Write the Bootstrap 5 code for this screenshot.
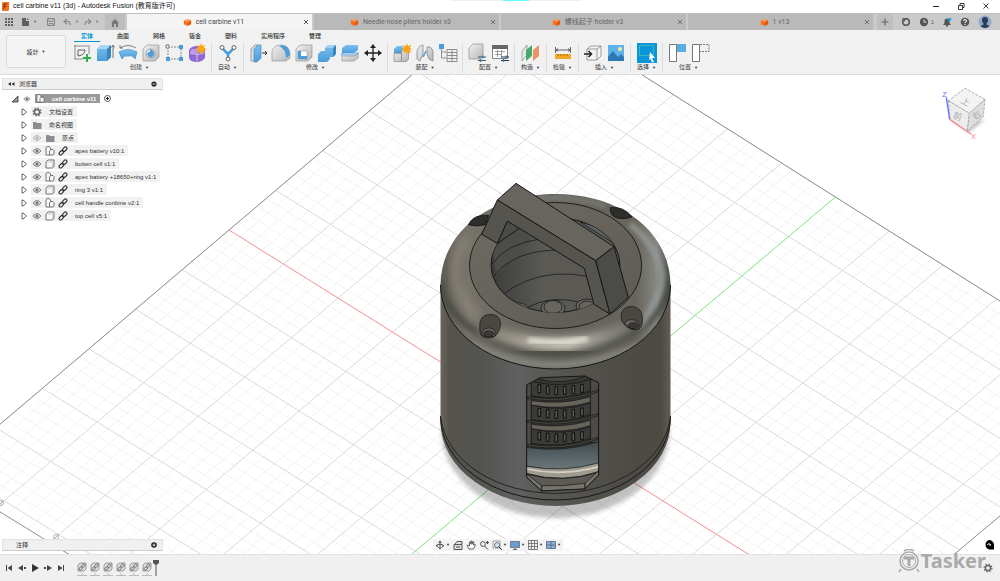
<!DOCTYPE html>
<html lang="zh-CN">
<head>
<meta charset="utf-8">
<meta name="viewport" content="width=device-width, initial-scale=1">
<title>cell carbine v11 (3d) - Autodesk Fusion</title>
<link rel="stylesheet" href="https://cdn.jsdelivr.net/npm/bootstrap@5.3.0/dist/css/bootstrap.min.css">
<style>
  body { font: 6px/8px "Liberation Sans", "Noto Sans CJK SC", sans-serif; color: #333; background: #fff; }
  button { font: inherit; color: inherit; background: none; border: 0; padding: 0; display: inline-flex; align-items: center; justify-content: center; }
  svg { display: block; flex: none; }
  .titlebar { height: 13px; font: 7px/10px "Liberation Sans", "Noto Sans CJK SC", sans-serif; color: #111; padding: 0 2px 1px 0; }
  .notch { top: 0; left: 50%; width: 130px; height: 1px; margin-left: -49px; background: linear-gradient(90deg, #f0f0f0 40%, #6ff 40% 60%, #f0f0f0 60%); }
  .win button { width: 25px; height: 12px; }
  .tabbar { height: 17px; background: #cacaca; color: #666; border-top: 1px solid #c0c0c0; }
  .quick, .account { width: 127px; flex: none; }
  .slim-btn { width: 18px; }
  .wide-btn { width: 22px; }
  .home-btn { width: 20px; margin-left: auto; margin-right: 2px; background: #bdbdbd; }
  .tab-strip { gap: 2px; }
  .doc-tab { background: #b9b9b9; font: 7px/10px Roboto, "Noto Sans CJK SC", sans-serif; min-width: 0; }
  .doc-tab.active { background: #f4f4f4; color: #444; }
  .doc-tab .close-btn { width: 12px; }
  .plus-btn { width: 16px; background: #bfbfbf; }
  .ribbon { background: #f1f1f1; border-bottom: 1px solid #dcdcdc; height: 45px; }
  .space-btn { width: 60px; height: 33px; border: 1px solid #d9d9d9; border-radius: 2px; background: #f4f4f4; margin: 5px 2px 0 6px; flex: none; }
  .ribbon-tabs { padding-left: 1px; height: 12px; }
  .ribbon-tabs button { padding: 0 12px; position: relative; font-weight: 500; }
  .ribbon-tabs .active { color: #0696d7; font-weight: 700; }
  .ribbon-tabs .active::after { content: ""; position: absolute; left: 5px; right: 5px; bottom: 0; height: 1px; background: #0696d7; }
  .tool-group { padding: 0 4px; border-right: 1px solid #ddd; min-width: 32px; height: 29px; margin-top: 1px; }
  .tool-group:last-child { border: 0; }
  .tools { gap: 3px; height: 21px; }
  .chosen { background: #0a96d8; }
  .caret { font-size: 4px; margin-left: 3px; }
  .viewport { overflow: hidden; min-height: 0; background: #fff; }
  .overlay-row { padding: 3px 0 0 2px; }
  .panel-head { width: 161px; height: 12px; background: #f0f0f0; border: 1px solid #e2e2e2; border-bottom-color: #ccc; padding: 0 5px; }
  .tree { padding: 2px 0 0 9px; }
  .tree li { height: 13px; }
  .kids-list { padding: 0 0 0 18px; }
  .twist { margin-right: 3px; }
  .entry { height: 11px; background: #f1f1f1; padding: 0 4px 0 1px; gap: 3px; }
  .entry span { padding-left: 4px; }
  .root-name { background: #999; color: #fff; height: 9px; padding: 0 4px 0 1px; gap: 7px; font-weight: 700; }
  .root-radio { appearance: none; width: 7px; height: 7px; margin: 0 0 0 4px; border: 1px solid #555; border-radius: 50%; background: radial-gradient(#222 35%, #fff 40%); }
  .dock { display: grid; grid-template-columns: 1fr auto 1fr; padding: 0 6px 3px 2px; }
  .navbar-3d { background: #f3f3f3; height: 12px; padding: 0 2px; gap: 3px; }
  .navbar-3d .caret { margin-left: 1px; }
  .timeline { height: 27px; background: #f0f0f0; border-top: 1px solid #e2e2e2; padding: 0 7px 0 5px; }
  .play { gap: 5px; }
  .play button { width: 8px; height: 10px; }
  .features { gap: 3px; margin-left: 12px; }
  .brand-mark { right: 14px; bottom: 8px; color: #aaa; font: 700 20px/24px "Noto Sans", sans-serif; z-index: 2; gap: 1px; }
</style>
</head>
<body class="vh-100 d-flex flex-column overflow-hidden position-relative">

<svg width="0" height="0" class="position-absolute">
  <defs>
    <linearGradient id="gb" x2="0" y2="1"><stop stop-color="#7cc0ee"/><stop offset="1" stop-color="#4a9ddb"/></linearGradient>
    <linearGradient id="gg" x2="1" y2="1"><stop stop-color="#f2f2f2"/><stop offset="1" stop-color="#b5b5b5"/></linearGradient>
    <symbol id="cube-o" viewBox="0 0 10 10"><path fill="#ff9a4d" d="M1 2.500 6 1l3 1.500-4 2z"/><path fill="#ff6a13" d="M1 2.500 5 4.500V9L1 7z"/><path fill="#e2550a" d="M9 2.500 5 4.500V9l4-2z"/></symbol>
    <symbol id="x" viewBox="0 0 8 8"><path stroke="currentColor" stroke-width=".9" d="M2 2l4 4M6 2 2 6"/></symbol>
    <symbol id="eye" viewBox="0 0 10 10"><path fill="#ddd" stroke="#888" d="M1 5q4-5 8 0-4 5-8 0z"/><circle cx="5" cy="5" r="1.600" fill="#777"/></symbol>
    <symbol id="comp" viewBox="0 0 10 10"><path fill="#f8f8f8" stroke="#555" stroke-width=".8" d="M1 8.500v-7l1-.8h2.500l1 1.300v1.500h2.500l1 1V8L8 9H1zM4.500 9V5l1.500-1.500"/></symbol>
    <symbol id="body" viewBox="0 0 10 10"><path fill="#f6f7fa" stroke="#555" stroke-width=".8" d="M1 9V3l2-2h6v6L7.500 9z"/><path fill="none" stroke="#bbb" stroke-width=".6" d="M1 3h6.500V9M7.500 3 9 1.500"/></symbol>
    <symbol id="lnk" viewBox="0 0 10 10"><g fill="none" stroke="#333" stroke-width="1.200"><rect x="4.200" y="1.700" width="5" height="3" rx="1.500" transform="rotate(-45 6.700 3.200)"/><rect x=".8" y="5.300" width="5" height="3" rx="1.500" transform="rotate(-45 3.300 6.800)"/></g></symbol>
    <symbol id="tri" viewBox="0 0 8 8"><path fill="#fff" stroke="#555" stroke-width=".9" d="M2 1h1l3.500 3L3 7H2z"/></symbol>
    <symbol id="fold" viewBox="0 0 10 10"><path fill="#8d8d8d" d="M1 2h3l1 1h4.500v6H1z"/></symbol>
    <symbol id="feat" viewBox="0 0 10 10"><path fill="#ddd" stroke="#888" stroke-width=".8" d="M1 9V3l2-2h6v6L7 9z"/><g fill="none" stroke="#666" stroke-width=".9"><rect x="4.300" y="2.500" width="4" height="2.400" rx="1.200" transform="rotate(-45 6.300 3.700)"/><rect x="1.700" y="5.300" width="4" height="2.400" rx="1.200" transform="rotate(-45 3.700 6.500)"/></g></symbol>
    <symbol id="gear" viewBox="0 0 10 10"><circle cx="5" cy="5" r="2.600" fill="none" stroke="#666" stroke-width="1.500"/><circle cx="5" cy="5" r="3.900" fill="none" stroke="#666" stroke-width="1.200" stroke-dasharray="1.500 1.560"/></symbol>
  </defs>
</svg>

<header class="titlebar d-flex align-items-center justify-content-between position-relative">
  <div class="notch position-absolute"></div>
  <div class="d-flex align-items-center">
    <svg class="me-1" width="9" height="11" viewBox="0 0 9 11"><path fill="#f37021" d="M2 2l1-1h6v8l-1 1H2z"/><path fill="none" stroke="#7a2b00" d="M4 8V3h3M4 5.500h2.500"/></svg>
    cell carbine v11 (3d) - Autodesk Fusion (教育版许可)
  </div>
  <div class="win d-flex">
    <button aria-label="最小化"><svg width="8" height="8"><path stroke="#222" d="M1 4.500h6"/></svg></button>
    <button aria-label="还原"><svg width="8" height="8"><path fill="none" stroke="#222" stroke-width=".9" d="M1.500 3.500h4v4h-4zM3 3V1.500h4v4H6"/></svg></button>
    <button aria-label="关闭"><svg width="8" height="8"><path stroke="#222" stroke-width=".9" d="M1.500 1.500l5 5M6.500 1.500l-5 5"/></svg></button>
  </div>
</header>

<nav class="tabbar d-flex">
  <div class="quick d-flex align-items-stretch">
    <button aria-label="数据面板" class="slim-btn"><svg width="8" height="8" fill="#5f5f5f"><path d="M0 0h2v2H0zM3 0h2v2H3zM6 0h2v2H6zM0 3h2v2H0zM3 3h2v2H3zM6 3h2v2H6zM0 6h2v2H0zM3 6h2v2H3zM6 6h2v2H6z"/></svg></button>
    <button aria-label="文件" class="wide-btn"><svg width="9" height="10"><path fill="#5f5f5f" d="M1 1h4v3h3v5H1zM6 1l2 2H6z"/></svg><span class="caret">▼</span></button>
    <button aria-label="保存" class="wide-btn"><svg width="8" height="8" viewBox="0 0 8 8"><path fill="none" stroke="#888" d="M.5.5h7v7h-7zM2 .5v3h4v-3M2 7.500v-2h4v2"/></svg></button>
    <button aria-label="撤消" class="slim-btn"><svg width="9" height="8"><path fill="none" stroke="#8a8a8a" stroke-width="1.200" d="M4 1 1 3.500 4 6M1.500 3.500H6l1.500 3.500"/></svg><span class="caret text-secondary">▼</span></button>
    <button aria-label="重做" class="wide-btn"><svg width="9" height="8"><path fill="none" stroke="#8a8a8a" stroke-width="1.200" d="M5 1l3 2.500L5 6M7.500 3.500H3L1.500 7"/></svg><span class="caret text-secondary">▼</span></button>
    <button aria-label="主页" class="home-btn"><svg width="8" height="9"><path fill="#777" d="M4 1l4 4H7v4H5V6H3v3H1V5H0z"/></svg></button>
  </div>
  <div class="tab-strip d-flex flex-fill">
    <div class="doc-tab active d-flex align-items-center flex-fill w-25"><button class="flex-fill"><svg class="me-1" width="9" height="9"><use href="#cube-o"/></svg>cell carbine v11</button><button class="close-btn" aria-label="关闭"><svg width="8" height="8"><use href="#x"/></svg></button></div>
    <div class="doc-tab d-flex align-items-center flex-fill w-25"><button class="flex-fill"><svg class="me-1" width="9" height="9"><use href="#cube-o"/></svg>Needle-nose pliers holder v3</button><button class="close-btn" aria-label="关闭"><svg width="8" height="8"><use href="#x"/></svg></button></div>
    <div class="doc-tab d-flex align-items-center flex-fill w-25"><button class="flex-fill"><svg class="me-1" width="9" height="9"><use href="#cube-o"/></svg>螺线起子 holder v3</button><button class="close-btn" aria-label="关闭"><svg width="8" height="8"><use href="#x"/></svg></button></div>
    <div class="doc-tab d-flex align-items-center flex-fill w-25"><button class="flex-fill"><svg class="me-1" width="9" height="9"><use href="#cube-o"/></svg>1 v13</button><button class="close-btn" aria-label="关闭"><svg width="8" height="8"><use href="#x"/></svg></button></div>
  </div>
  <div class="account d-flex align-items-stretch justify-content-between ps-1 pe-2">
    <button class="plus-btn" aria-label="新建"><svg width="8" height="8"><path stroke="#666" stroke-width="1.200" d="M4 .5v7M.5 4h7"/></svg></button>
    <button aria-label="扩展"><svg width="10" height="10"><circle cx="5" cy="5" r="3.300" fill="none" stroke="#555" stroke-width="1.600"/><path fill="#555" d="M1 1l4 1-2 3z"/></svg></button>
    <button aria-label="作业状态"><svg width="10" height="10"><circle cx="5" cy="5" r="4.200" fill="#555"/><path fill="none" stroke="#ddd" d="M5 2.500V5h2.500"/></svg>&nbsp;1</button>
    <button aria-label="通知"><svg width="10" height="10"><path fill="#555" d="M1 8l1.500-2V4a2.500 2.500 0 0 1 5 0v2L9 8H6v1.500H4V8z"/><circle cx="7.500" cy="2.500" r="1.800" fill="#18a0e0"/></svg></button>
    <button aria-label="帮助"><svg width="10" height="10"><circle cx="5" cy="5" r="4.300" fill="#555"/><path fill="none" stroke="#fff" d="M3.500 4q0-1.500 1.500-1.500T6.500 4Q6.500 5 5 5.300v.8M5 7v1"/></svg></button>
    <button aria-label="用户"><svg width="14" height="14"><circle cx="7" cy="7" r="6.500" fill="#8faccb"/><path fill="#2c3e55" d="M7 2c4 0 3.500 5 1.500 6.500v1l3 1.500q-4.500 4-9 0l3-1.500v-1C3.500 7 3 2 7 2z"/></svg></button>
  </div>
</nav>

<section class="ribbon d-flex">
  <button class="space-btn">設計<span class="caret">▼</span></button>
  <div>
    <div class="ribbon-tabs d-flex">
      <button class="active">实体</button><button>曲面</button><button>网格</button><button>钣金</button><button>塑料</button><button>实用程序</button><button>管理</button>
    </div>
    <div class="d-flex">
      <div class="tool-group d-flex flex-column align-items-center">
        <div class="tools d-flex">
          <button aria-label="草图"><svg width="20" height="20"><path fill="none" stroke="#777" stroke-width=".8" d="M2 3h14M3 2v14M17 2v9M2 16h9"/><path fill="none" stroke="#444" stroke-width=".8" d="M6 13V7h7q0 5-7 6z"/><path fill="none" stroke="#2eae4e" stroke-width="2" d="M15 11v8M11 15h8"/></svg></button>
          <button aria-label="拉伸"><svg width="20" height="20"><path fill="url(#gb)" d="M2 6l4-4h10v12l-4 4H2z"/><path fill="#a8d6f5" d="M2 6l4-4h10l-4 4z"/><path fill="#3b84bf" d="M12 6l4-4v12l-4 4z"/><path fill="none" stroke="#555" stroke-width=".8" d="M18 3v12M16.500 4.500 18 2l1.500 2.500"/></svg></button>
          <button aria-label="旋转"><svg width="20" height="20"><path fill="url(#gb)" stroke="#3b84bf" stroke-width=".6" d="M1 9q9-5 18 0l-2 7q-2-4-7-3-4-1-6 3z"/><path fill="none" stroke="#666" stroke-width=".8" d="M2 5q8-5 16 0M2 2v3h3"/></svg></button>
          <button aria-label="孔"><svg width="20" height="20"><path fill="url(#gg)" stroke="#999" stroke-width=".7" d="M2 6l4-4h12v12l-4 4H2z"/><circle cx="9.500" cy="10.500" r="4.500" fill="#eee" stroke="#888" stroke-width=".8"/><path fill="#4a9ddb" d="M6 10q4-1 3-4 5 2 4 6-3 4-6 1z"/></svg></button>
          <button aria-label="阵列"><svg width="20" height="20"><path fill="none" stroke="#888" stroke-dasharray="2 1" d="M4 4h13v12H4z"/><path fill="#fff" stroke="#777" d="M2 2h3v3H2z"/><path fill="#4a9ddb" d="M15 2h4v4h-4zM2 14h4v4H2zM15 14h4v4h-4z"/></svg></button>
          <button aria-label="创建形状"><svg width="20" height="20"><path fill="#9169d2" d="M2 7q2-4 8-4 7 0 8 4v8q-3 4-8 4-7 0-8-4z"/><path fill="#b998ea" d="M4 6h5v4H3z"/><path fill="none" stroke="#d7c4f4" d="M3 10q7 3 14 0M10 5v13"/><path fill="#f9a51a" d="M14 0l1.300 3L18 2l-1 3 3 1-3 1 1 3-2.700-1L14 12l-1-3-3 1 1-3-3-1 3-1-1-3 3 1z"/></svg></button>
        </div>
        <span>创建<span class="caret">▼</span></span>
      </div>
      <div class="tool-group d-flex flex-column align-items-center">
        <div class="tools d-flex"><button aria-label="自动建模"><svg width="20" height="20"><path fill="none" stroke="#4a9ddb" stroke-width="2.500" d="M4 5l6 6v6M16 5l-6 6"/><g fill="#fff" stroke="#666"><circle cx="4" cy="4.500" r="2"/><circle cx="16" cy="4.500" r="2"/><circle cx="10" cy="16" r="2"/></g></svg></button></div>
        <span>自动<span class="caret">▼</span></span>
      </div>
      <div class="tool-group d-flex flex-column align-items-center">
        <div class="tools d-flex">
          <button aria-label="按拉"><svg width="20" height="20"><path fill="#ddd" stroke="#888" stroke-width=".8" d="M3 6l4-4h3v12l-4 4H3z"/><path fill="url(#gb)" stroke="#3b84bf" stroke-width=".6" d="M6 6l4-4h3v13l-4 4H6z"/><path fill="none" stroke="#333" d="M14 10h5M17 8l2 2-2 2"/></svg></button>
          <button aria-label="圆角"><svg width="20" height="20"><path fill="url(#gg)" stroke="#999" stroke-width=".7" d="M1 18V8q2-6 9-6 8 0 9 9v4l-4 3z"/><path fill="#4a9ddb" d="M8 3q4-2 8 1 3 3 3 8l-4 3q0-9-7-12z"/></svg></button>
          <button aria-label="抽壳"><svg width="20" height="20"><path fill="url(#gg)" stroke="#999" stroke-width=".7" d="M2 6l4-4h12v12l-4 4H2z"/><path fill="#fff" stroke="#999" stroke-width=".6" d="M4 8h9v8H4z"/><path fill="#4a9ddb" d="M4 16V8h3v5h6v3z"/></svg></button>
          <button aria-label="合并"><svg width="20" height="20"><path fill="url(#gb)" d="M8 5l3-3h8v9l-3 3h-3v2l-3 3H1v-8l3-3h4z"/><path fill="#9dd0f3" d="M8 5l3-3h8l-3 3z"/><path fill="#3b84bf" d="M16 5l3-3v9l-3 3z"/></svg></button>
          <button aria-label="分割"><svg width="20" height="20"><path fill="url(#gb)" d="M2 5l4-3h12v5l-4 3H2z"/><path fill="#cfe8f8" stroke="#4a9ddb" stroke-width=".7" d="M1 11l4-1h14l-4 2H1z"/><path fill="url(#gg)" stroke="#888" stroke-width=".6" d="M2 13h12l4-2v4l-4 3H2z"/></svg></button>
          <button aria-label="移动"><svg width="20" height="20"><path stroke="#222" stroke-width="1.300" d="M10 3v14M3 10h14"/><path fill="#222" d="M10 1l3 4H7zM10 19l3-4H7zM1 10l4-3v6zM19 10l-4-3v6z"/></svg></button>
        </div>
        <span>修改<span class="caret">▼</span></span>
      </div>
      <div class="tool-group d-flex flex-column align-items-center">
        <div class="tools d-flex">
          <button aria-label="新建零部件"><svg width="20" height="20"><path fill="url(#gb)" d="M2 6l3-3h6v7H2z"/><path fill="url(#gg)" stroke="#888" stroke-width=".7" d="M2 10.500h7.500v8H2zM9.500 7h7v9l-2 2.500H9.500z"/><path fill="#f9a51a" d="M15 0l1 3 3-1-1 3 2 1-2 1 1 3-3-1-1 3-1-3-3 1 1-3-3-1 3-1-1-3 3 1z"/></svg></button>
          <button aria-label="联接"><svg width="20" height="20"><path fill="url(#gg)" stroke="#888" stroke-width=".8" d="M2 9q1-6 6-7v9l-3 7-3-2zM18 9q-1-6-6-5v7l2 5 4 2z"/><path fill="none" stroke="#4a9ddb" stroke-width="1.500" d="M8 14l3-6"/></svg></button>
          <button aria-label="零部件表"><svg width="20" height="20"><path fill="#4a9ddb" d="M1 1h5v5H1z"/><path fill="none" stroke="#777" stroke-width=".8" d="M3.500 6v9H8M4 9h4M9 6.500h10v12H9zM9 9.500h10M9 12.500h10M9 15.500h10M14 7v11"/></svg></button>
        </div>
        <span>装配<span class="caret">▼</span></span>
      </div>
      <div class="tool-group d-flex flex-column align-items-center">
        <div class="tools d-flex">
          <button aria-label="配置零件"><svg width="20" height="20"><path fill="url(#gg)" stroke="#999" stroke-width=".8" d="M2 5l4-4h10v11l-3 4H2z"/><path stroke="#333" stroke-width=".8" d="M11 14h8M11 17.500h8"/><path stroke="#2a7fc0" stroke-width="1.500" d="M16 12.500v3M13.500 16v3"/></svg></button>
          <button aria-label="配置表"><svg width="20" height="20"><path fill="#fff" stroke="#666" stroke-width=".8" d="M2.500 2.500h15v13h-15z"/><path fill="#666" d="M2 2h16v4H2z"/><path fill="none" stroke="#888" stroke-width=".8" d="M5 8.500h10M5 11.500h7M7.500 7v7M11.500 7v7"/><path stroke="#333" d="M11 14h8M11 17.500h8"/><path stroke="#2a7fc0" stroke-width="1.500" d="M16 12.500v3M13.500 16v3"/></svg></button>
        </div>
        <span>配置<span class="caret">▼</span></span>
      </div>
      <div class="tool-group d-flex flex-column align-items-center">
        <div class="tools d-flex"><button aria-label="偏移平面"><svg width="20" height="20"><path fill="#e8e8e8" stroke="#888" stroke-width=".7" d="M1 8l5-6v10l-5 6z"/><path fill="#45ab6d" d="M5 7l6-5v11l-6 5z"/><path fill="#e89562" d="M12 7l6-5v11l-6 5z"/></svg></button></div>
        <span>构造<span class="caret">▼</span></span>
      </div>
      <div class="tool-group d-flex flex-column align-items-center">
        <div class="tools d-flex"><button aria-label="测量"><svg width="20" height="20"><path fill="none" stroke="#444" stroke-width=".8" d="M2.500 4v6M17.500 4v6M3 7h14M5 5.500 3 7l2 1.500M15 5.500 17 7l-2 1.500"/><path fill="#f5a623" d="M2 11h16v5H2z"/><path stroke="#a96b00" d="M5 11v2M8 11v2M11 11v2M14 11v2"/></svg></button></div>
        <span>检验<span class="caret">▼</span></span>
      </div>
      <div class="tool-group d-flex flex-column align-items-center">
        <div class="tools d-flex">
          <button aria-label="插入零件"><svg width="20" height="20"><path fill="#f4f4f6" stroke="#888" stroke-width=".8" d="M4 6l4-3h10v10l-4 4H4zM14 17V6H4M14 6l4-3"/><path fill="none" stroke="#222" stroke-width="1.500" d="M1 11h7M5.500 8l3 3-3 3"/></svg></button>
          <button aria-label="插入图像"><svg width="20" height="20"><path fill="#5fb2ea" d="M2 2h16v16H2z"/><path fill="#2c78b5" d="M2 14l5-6 5 6 3-3 3 3v4H2z"/><circle cx="14" cy="6" r="2" fill="#ffe9a8"/></svg></button>
        </div>
        <span>插入<span class="caret">▼</span></span>
      </div>
      <div class="tool-group d-flex flex-column align-items-center">
        <div class="tools d-flex"><button class="chosen" aria-label="选择工具"><svg width="20" height="20"><path fill="none" stroke="#5fd3a2" stroke-width=".8" stroke-dasharray="2 1" d="M2.500 2.500h14v10h-14z"/><path fill="#fff" d="M13 9l5 6h-3l2 4-2 .5-1.500-4-1.500 2z"/></svg></button></div>
        <span>选择<span class="caret">▼</span></span>
      </div>
      <div class="tool-group d-flex flex-column align-items-center">
        <div class="tools d-flex">
          <button aria-label="捕获位置"><svg width="20" height="20"><path fill="#fff" stroke="#777" d="M2.500 1.500h7v17h-7z"/><path fill="#5cabe6" d="M10 1h9v8h-9z"/></svg></button>
          <button aria-label="还原位置"><svg width="20" height="20"><path fill="#fff" stroke="#777" d="M2.500 1.500h7v17h-7z"/><path fill="none" stroke="#777" stroke-dasharray="2 1" d="M10 1.500h9v7h-9"/></svg></button>
        </div>
        <span>位置<span class="caret">▼</span></span>
      </div>
    </div>
  </div>
</section>

<main class="viewport flex-fill position-relative d-flex flex-column justify-content-between">
  <!-- 3D scene behind the panels -->
  <svg class="position-absolute top-0 start-0 w-100 h-100" viewBox="0 75 1000 479" preserveAspectRatio="xMidYMid slice">
    <defs>
      <linearGradient id="wall"><stop stop-color="#6b665d"/><stop offset=".04" stop-color="#55534d"/><stop offset=".17" stop-color="#53534f"/><stop offset=".34" stop-color="#5f6160"/><stop offset=".42" stop-color="#5a5a57"/><stop offset=".6" stop-color="#55534e"/><stop offset=".85" stop-color="#4c4a44"/><stop offset=".96" stop-color="#4e4b44"/><stop offset="1" stop-color="#625e55"/></linearGradient>
      <linearGradient id="dome" x2="1" y2="0"><stop stop-color="#5f5c55"/><stop offset=".12" stop-color="#77736a"/><stop offset=".3" stop-color="#6b6962"/><stop offset=".6" stop-color="#65635b"/><stop offset=".85" stop-color="#68655d"/><stop offset=".94" stop-color="#858882"/><stop offset="1" stop-color="#4d4d49"/></linearGradient>
      <linearGradient id="ringface" x2="1" y2="1"><stop stop-color="#6f6b63"/><stop offset="1" stop-color="#5d5a53"/></linearGradient>
      <linearGradient id="bore"><stop stop-color="#3c3c39"/><stop offset=".4" stop-color="#5a5954"/><stop offset="1" stop-color="#5c5952"/></linearGradient>
      <linearGradient id="glow"><stop stop-color="#9a958a" stop-opacity=".4"/><stop offset=".35" stop-color="#b8b3a7"/><stop offset=".6" stop-color="#cfccc2"/><stop offset="1" stop-color="#8c8c84" stop-opacity=".4"/></linearGradient>
      <linearGradient id="sea" x2="0" y2="1"><stop stop-color="#424b4e"/><stop offset="1" stop-color="#6a787c"/></linearGradient>
      <filter id="soft" x="-30%" y="-30%" width="160%" height="160%"><feGaussianBlur stdDeviation="4"/></filter>
      <filter id="soft2" x="-30%" y="-30%" width="160%" height="160%"><feGaussianBlur stdDeviation="2"/></filter>
      <clipPath id="domeclip"><path d="M440.500 285C441 232 490 194 555.500 194S670 232 670.500 285A115 84 0 0 1 440.500 285z"/></clipPath>
      <clipPath id="boreclip"><ellipse cx="555.500" cy="265" rx="64" ry="47.500"/></clipPath>
      <clipPath id="slot"><path d="M320 135 360 113 495 108 536 128V405L495 447 365 453 320 412z"/></clipPath>
    </defs>
    <path id="minor" fill="none" stroke="#f0f0f0" stroke-width=".8"/>
    <path id="major" fill="none" stroke="#d6d6d6" stroke-width=".9"/>
    <path id="edge" fill="none" stroke="#888" stroke-width=".9"/>
    <path id="axis-x" stroke="#f99"/>
    <path id="axis-y" stroke="#8e8"/>
    <g fill="none" stroke="#999" stroke-width=".8"><circle cx="1" cy="503" r="2.500"/><circle cx="56" cy="537" r="2.500"/><path d="M-2 506l5-5M53 540l6-6"/></g>

    <ellipse cx="555.500" cy="431" rx="114" ry="87" fill="#000" opacity=".24" filter="url(#soft2)"/>
    <path fill="url(#wall)" d="M440.500 285V422A115 84 0 0 0 670.500 422V285z"/>
    <g fill="none" stroke="#161616"><path d="M440.500 416A115 84 0 0 0 670.500 416"/><path stroke-width=".8" d="M441 419A115 82 0 0 0 670 419"/></g>
    <path fill="url(#dome)" d="M440.500 285C441 232 490 194 555.500 194S670 232 670.500 285A115 84 0 0 1 440.500 285z"/>
    <g clip-path="url(#domeclip)" fill="none">
      <path stroke="#454642" stroke-width="8" opacity=".7" filter="url(#soft2)" d="M440 282A116 78 0 0 0 671 282"/>
      <path stroke="#85867f" stroke-width="7" opacity=".9" filter="url(#soft2)" d="M470 344Q555 386 642 344"/>
      <path stroke="#8f897e" stroke-width="9" opacity=".8" filter="url(#soft)" d="M466 236Q440 280 478 318"/>
      <path stroke="url(#glow)" stroke-width="13" filter="url(#soft)" d="M480 328Q560 362 630 326"/>
      <path stroke="#e6e4dc" stroke-width="5" opacity=".9" filter="url(#soft2)" d="M528 340Q562 345 588 338"/>
      <path stroke="#979d9b" stroke-width="6" opacity=".8" filter="url(#soft2)" d="M630 224Q668 256 660 290 650 314 638 328"/>
      <path stroke="#8b8f8d" stroke-width="4" opacity=".6" filter="url(#soft2)" d="M508 205Q555 190 606 206"/>
    </g>
    <path fill="none" stroke="#161616" d="M440.500 285A115 84 0 0 0 670.500 285"/>
    <ellipse cx="555.500" cy="265.500" rx="86" ry="63" fill="url(#ringface)" stroke="#161616" stroke-width=".9"/>
    <ellipse cx="555.500" cy="265" rx="64.500" ry="47.500" fill="url(#bore)" stroke="#161616"/>
    <g clip-path="url(#boreclip)" fill="none" stroke="#1c1c1c" stroke-width=".8">
      <path fill="#4c4c48" stroke="none" d="M488 220h30l12 22-34 34z"/>
      <path d="M492 264Q506 244 540 239M494 276Q514 250 560 250M502 295Q550 258 620 286M520 312Q555 288 600 310"/>
      <g fill="#67655f"><ellipse cx="519" cy="309" rx="9" ry="6"/><ellipse cx="553" cy="308" rx="12" ry="8"/><ellipse cx="553" cy="307" rx="9" ry="6.500"/><ellipse cx="587" cy="306" rx="11" ry="7"/><ellipse cx="587" cy="307" rx="8" ry="6"/></g>
      <path fill="#5c6366" d="M580 222q22 4 38 24z"/>
    </g>
    <!-- handle -->
    <g transform="translate(420 170) scale(.33333)" stroke="#161616" stroke-width="3" stroke-linejoin="round">
      <path fill="#4b4b47" d="M262 153 300 174 232 220z"/>
      <path fill="#68655e" d="M288 40 582 230 527 272 232 90z"/>
      <path fill="#55544f" d="M232 90 527 272 570 432 522 403 493 295 262 153 232 220 185 193z"/>
      <path fill="#4b4b47" d="M582 230 625 382 570 432 527 272z"/>
      <g fill="#2d2d2b" stroke-width="2.500"><path d="M145 164Q160 132 206 136L196 164Q170 172 145 164z"/><path d="M571 113Q612 108 636 141 602 152 580 139 568 128 571 113z"/></g>
      <g stroke-width="2"><path fill="#494741" d="M179 470Q178 436 208 433 240 432 242 461 240 488 222 501 200 508 185 498 178 490 179 470z"/><path fill="#6a675f" d="M186 496Q183 476 206 474 230 474 225 498 206 506 186 496z"/><ellipse cx="206" cy="491" rx="15" ry="9" fill="#3a3935"/>
      <path fill="#494741" d="M603 440Q604 410 636 409 666 412 668 446 668 472 655 478 635 482 620 470 603 458 603 440z"/><path fill="#6a675f" d="M614 460Q622 446 642 450 662 458 656 477 630 482 614 460z"/><ellipse cx="640" cy="467" rx="14" ry="9" fill="#3a3935"/></g>
    </g>
    <!-- side window with stacked rings -->
    <g transform="translate(420 340) scale(.33333)">
      <g clip-path="url(#slot)" stroke="#151515" stroke-width="2" fill="none">
        <path fill="#353532" stroke="none" d="M318 100h220v360H318z"/>
        <path fill="#4c4b47" d="M320 128h14v200h-14zM511 118h25v190h-25z"/>
        <path fill="#474641" d="M358 118Q430 136 497 108V100H358z"/>
        <g id="ring3"></g>
        <path fill="url(#sea)" d="M318 322Q430 340 538 304V374Q430 402 318 378z"/>
        <path fill="#9f9a8e" d="M318 378Q430 400 538 368V394Q430 432 318 400z"/>
        <path stroke="#d5d0c3" stroke-width="5" d="M320 387Q430 410 536 380"/>
        <path fill="#5c5a54" d="M318 402Q430 432 538 396V460H318z"/>
        <path fill="#76746c" d="M320 402 365 437 365 453 320 412zM536 392 495 430V447L536 405zM365 437Q430 440 495 430V447L365 453z"/>
      </g>
      <path fill="none" stroke="#151515" stroke-width="3" d="M320 135 360 113 495 108 536 128V405L495 447 365 453 320 412z"/>
    </g>
  </svg>

  <div class="overlay-row position-relative d-flex justify-content-between align-items-start">
    <aside>
      <div class="panel-head d-flex align-items-center"><svg width="7" height="6"><path fill="#333" d="M3 1v4L0 3zM6.500 1v4l-3-2z"/></svg><span class="ms-1 me-auto">浏览器</span><button aria-label="折叠"><svg width="6" height="6"><circle cx="3" cy="3" r="2.600" fill="#222"/><path stroke="#fff" stroke-width=".8" d="M1.500 3h3"/></svg></button></div>
      <ul class="tree list-unstyled mb-0">
        <li class="d-flex align-items-center"><svg class="me-1" width="8" height="8"><path fill="#999" stroke="#333" stroke-width=".8" d="M1 7l6-6v6z"/></svg><svg class="me-1" width="8" height="8"><use href="#eye"/></svg><span class="root-name d-flex align-items-center"><svg width="9" height="9"><use href="#comp"/></svg>cell carbine v11</span><input type="radio" checked aria-label="激活零部件" class="root-radio"></li>
      </ul>
      <ul class="tree kids-list list-unstyled mb-0" id="kids"></ul>
    </aside>
    <svg width="80" height="80" viewBox="0 24 240 240" role="img" aria-label="ViewCube">
      <path fill="#000" opacity=".2" filter="url(#soft)" d="M95 150l50 40 50-40z"/>
      <g fill="#f3f3f3" stroke="#8c8c8c" stroke-width="2" stroke-dasharray="8 4"><path d="M135 55 195 88 148 130 85 92z"/><path fill="#ececec" d="M85 92 148 130 142 184 90 148z"/><path fill="#dedede" d="M195 88 190 140 142 184 148 130z"/></g>
      <g fill="#aaa" font-size="26"><text x="124" y="104" transform="rotate(28 136 94)">上</text><text x="100" y="148" transform="rotate(20 112 138)">前</text><text x="156" y="146" transform="rotate(-35 168 136)">右</text></g>
      <path stroke="#6a6aff" stroke-width="4" d="M79 82l10 66"/><path stroke="#f88" stroke-width="4" d="M89 148l64 44"/>
      <g font-size="22"><text x="67" y="80" fill="#66f">Z</text><text x="153" y="208" fill="#f77">X</text></g>
    </svg>
  </div>

  <div class="dock position-relative align-items-center">
    <div class="panel-head d-flex align-items-center"><span class="ms-2 me-auto">注释</span><button aria-label="展开"><svg width="6" height="6"><circle cx="3" cy="3" r="2.800" fill="#222"/><path stroke="#fff" stroke-width=".8" d="M1.500 3h3M3 1.500v3"/></svg></button></div>
    <div class="navbar-3d d-flex align-items-center">
      <button aria-label="动态观察"><svg width="10" height="10"><path fill="none" stroke="#444" d="M5 1v8M1 5.500q4-3 8 0M1 5.500l2 1.500M9 5.500 7 7M3.500 2.500 5 1l1.500 1.500M3.500 7.500 5 9l1.500-1.500"/></svg><span class="caret">▼</span></button>
      <button aria-label="观察"><svg width="10" height="10"><path fill="#ddd" stroke="#555" d="M1 4.500h8v5H1zM2 4l2-2.500h5V4M3 7h4"/></svg></button>
      <button aria-label="平移"><svg width="10" height="10"><path fill="#fff" stroke="#555" stroke-width=".9" d="M3 9 1 5.500l1-.5 1.500 1V2l1-.3.5 2.500V1h1v3.200l1-2.700.8.500-.4 3L9 4v2L7.500 9z"/></svg></button>
      <button aria-label="缩放"><svg width="10" height="10"><circle cx="4" cy="4" r="2.500" fill="#d7eaf8" stroke="#666"/><path stroke="#444" d="M5.500 6 9 9.500M7 2.500h3M8.500 1v3"/></svg></button>
      <button aria-label="窗口缩放"><svg width="10" height="10"><path fill="#fff" stroke="#888" stroke-width=".8" d="M1 1h7v7H1z"/><circle cx="5" cy="5" r="2.500" fill="#d7eaf8" stroke="#555" stroke-width=".8"/><path stroke="#333" d="M7 7l3 3"/></svg><span class="caret">▼</span></button>
      <button aria-label="显示设置"><svg width="10" height="10"><path fill="#6a9fd4" stroke="#667" stroke-width=".8" d="M.5 1.500h9v6h-9z"/><path stroke="#666" d="M3 9.500h4M5 8v1"/></svg><span class="caret">▼</span></button>
      <button aria-label="栅格"><svg width="10" height="10"><path fill="#eee" stroke="#666" stroke-width=".8" d="M.5.5h9v9h-9zM3.500 0v10M6.500 0v10M0 3.500h10M0 6.500h10"/></svg><span class="caret">▼</span></button>
      <button aria-label="视口"><svg width="10" height="10"><path fill="#86aede" stroke="#567" stroke-width=".8" d="M.5 1.500h9v7h-9zM5 1v8M0 5h10"/></svg><span class="caret">▼</span></button>
    </div>
    <button class="ms-auto" aria-label="助手"><svg width="10" height="10"><path fill="#000" d="M5 0a5 5 0 0 1 5 5v4.500H5A5 5 0 0 1 5 0z"/><path fill="none" stroke="#fff" stroke-width=".9" d="M3 5q2-3 4 0H5"/></svg></button>
  </div>
</main>

<footer class="timeline d-flex align-items-center">
  <div class="play d-flex">
    <button aria-label="到开头"><svg width="8" height="8" fill="#444"><path d="M1 1h1v6H1zM7 1v6L2.500 4z"/></svg></button>
    <button aria-label="上一步"><svg width="8" height="8" fill="#444"><path d="M5 1v6L0 4zM6 3h2v2H6z"/></svg></button>
    <button aria-label="播放"><svg width="8" height="8" fill="#333"><path d="M1 0l7 4-7 4z"/></svg></button>
    <button aria-label="下一步"><svg width="8" height="8" fill="#444"><path d="M3 1v6l5-3zM0 3h2v2H0z"/></svg></button>
    <button aria-label="到结尾"><svg width="8" height="8" fill="#444"><path d="M6 1h1v6H6zM1 1v6l4.500-3z"/></svg></button>
  </div>
  <div class="features d-flex align-items-center" id="features"></div>
  <svg width="8" height="18"><path fill="#555" d="M1 1h6v3L4.500 6v11h-1V6L1 4z"/></svg>
  <button class="ms-auto" aria-label="设置"><svg width="10" height="10"><use href="#gear"/></svg></button>
</footer>

<div class="brand-mark position-absolute d-flex align-items-center">
  <svg width="22" height="24" viewBox="0 0 22 24" fill="none" stroke="#aaa"><circle cx="11" cy="12" r="9" stroke-width="1.500"/><circle cx="11" cy="12" r="6.500"/><path stroke-width="3" d="M6 9h10M11 9v8"/><path stroke-width="1.500" d="M6 2q5-3 10 0M3 20l-2 3M19 20l2 3"/></svg>Tasker
</div>

<script src="https://cdn.jsdelivr.net/npm/bootstrap@5.3.0/dist/js/bootstrap.bundle.min.js"></script>
<script>
  // Ground plane: project grid coordinates (u, v) to the scene
  const C = [555, 433.5], L = [229, 230], R = [835.5, 197], G = 0.006, H = -0.003;
  const U0 = -6, U1 = 5.8, V0 = -6.2, V1 = 6;
  const coef = i => [(C[i] - L[i] * (1 - G)) / 6, (R[i] * (1 + H) - C[i]) / 6, C[i]];
  const kx = coef(0), ky = coef(1);
  const pt = (u, v) => {
    const w = 1 + (G * u + H * v) / 6;
    return ((kx[0] * u + kx[1] * v + kx[2]) / w).toFixed(1) + ' ' + ((ky[0] * u + ky[1] * v + ky[2]) / w).toFixed(1);
  };
  const seg = (a, b, c, d) => 'M' + pt(a, b) + 'L' + pt(c, d);
  let minor = '', major = '';
  for (let i = -31; i <= 30; i++) {
    const t = i / 5;
    let s = '';
    if (t >= U0 && t <= U1) s += seg(t, V0, t, V1);
    if (t >= V0 && t <= V1) s += seg(U0, t, U1, t);
    if (i % 5) minor += s; else major += s;
  }
  const put = (id, d) => document.getElementById(id).setAttribute('d', d);
  put('minor', minor);
  put('major', major);
  put('edge', seg(U0, V0, U0, V1) + seg(U0, V1, U1, V1) + seg(U1, V1, U1, V0) + seg(U1, V0, U0, V0));
  put('axis-x', seg(U0, 0, U1, 0));
  put('axis-y', seg(0, V0, 0, V1));

  // Three toothed rings seen through the side window
  let rings = '';
  for (const y of [0, 71, 142]) {
    rings += `<path fill="#3b3b38" d="M334 ${124 + y}Q430 ${148 + y} 511 ${118 + y}V${152 + y}Q430 ${184 + y} 334 ${168 + y}z"/>`;
    rings += `<path fill="#484742" d="M322 ${170 + y}Q430 ${188 + y} 534 ${150 + y}V${156 + y}Q430 ${194 + y} 322 ${176 + y}z"/>`;
    if (y < 142) rings += `<path fill="#66635b" d="M334 ${182 + y}Q430 ${196 + y} 511 ${170 + y}V${186 + y}Q430 ${212 + y} 334 ${196 + y}z"/>`;
    [354, 379, 405, 430, 456, 482].forEach((x, n) => {
      const ty = y + [134, 138, 140, 139, 137, 133][n];
      rings += `<path fill="#5c5b55" stroke="#0c0c0c" stroke-width="3" d="M${x} ${ty}h8v24h-8z"/>`;
    });
  }
  document.getElementById('ring3').innerHTML = rings;

  // Browser tree
  const icon = (id, o = 1) => `<svg width="10" height="10" opacity="${o}"><use href="#${id}"/></svg>`;
  const rows = [
    [icon('gear'), '文档设置'], [icon('fold'), '命名视图'], [icon('eye', .5) + icon('fold'), '原点'],
    ...[['comp', 'apex battery v10:1'], ['body', 'botten cell v1:1'], ['comp', 'apex battery +18650+ring v1:1'],
        ['body', 'ring 3 v1:1'], ['comp', 'cell handle conbine v2:1'], ['body', 'top cell v5:1']]
      .map(([k, t]) => [icon('eye') + icon(k) + icon('lnk'), t])
  ];
  document.getElementById('kids').innerHTML = rows.map(([i, t]) =>
    `<li class="d-flex align-items-center"><svg class="twist" width="8" height="8"><use href="#tri"/></svg><div class="entry d-flex align-items-center">${i}<span>${t}</span></div></li>`).join('');
  document.getElementById('features').innerHTML = Array(6).fill('<svg width="10" height="16" viewBox="0 0 10 16"><use href="#feat" y="2" width="10" height="10"/><path stroke="#bbb" fill="none" d="M0 15.500h10M5 13v3"/></svg>').join('');
</script>
</body>
</html>
